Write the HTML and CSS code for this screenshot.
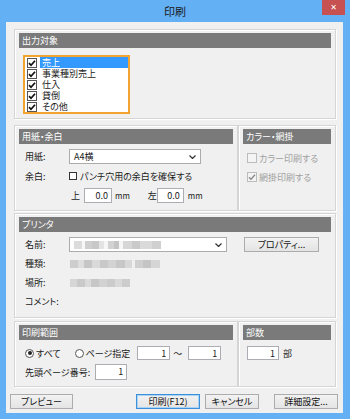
FILE: index.html
```html
<!DOCTYPE html>
<html lang="ja">
<head>
    <meta charset="UTF-8">
    <meta name="viewport" content="width=device-width, initial-scale=1.0">
    <title>印刷</title>
    <link rel="stylesheet" href="styles.css">
</head>
<body>
<div class="window">
    <div class="titlebar">印刷<span class="close">✕</span></div>

    <div class="client">
        <!-- 出力対象 -->
        <div class="group g-target">
            <div class="ghead">出力対象</div>
            <ul class="listbox">
                <li class="sel"><svg class="cb" viewBox="0 0 10 10"><rect x=".5" y=".5" width="9" height="9"/><path d="M2 5.2l2 2.1 4-4.6"/></svg><span>売上</span></li>
                <li><svg class="cb" viewBox="0 0 10 10"><rect x=".5" y=".5" width="9" height="9"/><path d="M2 5.2l2 2.1 4-4.6"/></svg><span>事業種別売上</span></li>
                <li><svg class="cb" viewBox="0 0 10 10"><rect x=".5" y=".5" width="9" height="9"/><path d="M2 5.2l2 2.1 4-4.6"/></svg><span>仕入</span></li>
                <li><svg class="cb" viewBox="0 0 10 10"><rect x=".5" y=".5" width="9" height="9"/><path d="M2 5.2l2 2.1 4-4.6"/></svg><span>貸倒</span></li>
                <li><svg class="cb" viewBox="0 0 10 10"><rect x=".5" y=".5" width="9" height="9"/><path d="M2 5.2l2 2.1 4-4.6"/></svg><span>その他</span></li>
            </ul>
        </div>

        <!-- 用紙・余白 / カラー・網掛 -->
        <div class="row r-paper">
            <div class="group g-left">
                <div class="ghead">用紙・余白</div>
                <div class="field f-first">
                    <label>用紙:</label>
                    <div class="select s-paper">A4横<svg class="chev" viewBox="0 0 7 4"><path d="M.5.5l3 3 3-3"/></svg></div>
                </div>
                <div class="field f-margin">
                    <label>余白:</label>
                    <span class="box"></span>パンチ穴用の余白を確保する
                </div>
                <div class="field f-offsets">
                    <span>上</span>
                    <span class="input i-top">0.0</span>
                    <span class="unit">mm</span>
                    <span class="left-label">左</span>
                    <span class="input i-left">0.0</span>
                    <span class="unit">mm</span>
                </div>
            </div>
            <div class="group g-right">
                <div class="ghead">カラー・網掛</div>
                <div class="dis first"><svg class="cb off" viewBox="0 0 10 10"><rect x=".5" y=".5" width="9" height="9"/></svg>カラー印刷する</div>
                <div class="dis"><svg class="cb" viewBox="0 0 10 10"><rect x=".5" y=".5" width="9" height="9"/><path d="M2 5.2l2 2.1 4-4.6"/></svg>網掛印刷する</div>
            </div>
        </div>

        <!-- プリンタ -->
        <div class="group g-printer">
            <div class="ghead">プリンタ</div>
            <div class="field f-first">
                <label>名前:</label>
                <div class="select s-printer"><span class="blur b-name"></span><svg class="chev" viewBox="0 0 7 4"><path d="M.5.5l3 3 3-3"/></svg></div>
                <span class="btn b-prop">プロパティ...</span>
            </div>
            <div class="info"><label>種類:</label><span class="blur b-type"></span></div>
            <div class="info"><label>場所:</label><span class="blur b-place"></span></div>
            <div class="info"><label>コメント:</label></div>
        </div>

        <!-- 印刷範囲 / 部数 -->
        <div class="row r-range">
            <div class="group g-left">
                <div class="ghead">印刷範囲</div>
                <div class="field f-radio">
                    <span class="radio on"></span><span class="r-all">すべて</span>
                    <span class="radio"></span><span>ページ指定</span>
                    <span class="input i-from">1</span>
                    <span class="tilde">～</span>
                    <span class="input i-to">1</span>
                </div>
                <div class="field f-start">
                    <span>先頭ページ番号:</span>
                    <span class="input i-start">1</span>
                </div>
            </div>
            <div class="group g-right">
                <div class="ghead">部数</div>
                <div class="field f-copies">
                    <span class="input i-copies">1</span><span>部</span>
                </div>
            </div>
        </div>

        <div class="buttons">
            <span class="btn b-preview">プレビュー</span>
            <span class="btn b-print">印刷(F12)</span>
            <span class="btn b-cancel">キャンセル</span>
            <span class="btn b-detail">詳細設定...</span>
        </div>
    </div>
</div>
</body>
</html>
```

FILE: styles.css
```css
* {
    box-sizing: border-box;
}
html, body {
    margin: 0;
}
body {
    width: 350px;
    height: 419px;
    overflow: hidden;
    background: #63b0f5;
    font-family: "Noto Sans CJK JP", "Noto Sans", sans-serif;
    font-size: 9px;
    color: #1b1b1b;
    font-feature-settings: "palt";
}
.window {
    position: relative;
    height: 419px;
}
.titlebar {
    height: 22px;
    line-height: 23px;
    text-align: center;
    font-size: 11px;
    color: #1a1a1a;
}
.close {
    position: absolute;
    top: 0;
    right: 5px;
    width: 23px;
    height: 15px;
    background: #c75050;
    color: #fff;
    font-family: "DejaVu Sans", sans-serif;
    font-size: 8px;
    font-weight: bold;
    line-height: 15px;
    text-align: center;
}
.client {
    margin: 0 7px 0 6px;
    height: 391px;
    background: #f0f0f0;
    padding: 7px 7px 0 8px;
}

/* group boxes */
.group {
    border: 1px solid #d5d5d5;
    box-shadow: inset 1px 1px 0 #fff, 1px 1px 0 #fff;
    padding: 3px 4px 0 4px;
}
.ghead {
    height: 15px;
    line-height: 15px;
    background: #7a7a7a;
    color: #fff;
    padding-left: 3px;
}
.row {
    display: flex;
}
.g-left {
    width: 224px;
}
.g-right {
    width: 98px;
}
.g-target {
    height: 90px;
}
.r-paper {
    margin-top: 6px;
    height: 86px;
}
.g-printer {
    margin-top: 2px;
    height: 105px;
}
.r-range {
    margin-top: 3px;
    height: 66px;
}

/* list box */
.listbox {
    list-style: none;
    margin: 7px 0 0 4px;
    padding: 0 0 0 2px;
    width: 107px;
    height: 59px;
    border: 2px solid #f2a330;
    background: #fff;
}
.listbox li {
    display: flex;
    align-items: center;
    height: 11px;
}
.listbox span {
    flex: 1;
    height: 11px;
    line-height: 11px;
    margin-left: 3px;
    padding-left: 2px;
}
.listbox .sel span {
    background: #3399ff;
    color: #fff;
}
.cb {
    width: 10px;
    height: 10px;
    flex: none;
}
.cb rect {
    fill: #fff;
    stroke: #555;
}
.cb path {
    fill: none;
    stroke: #111;
    stroke-width: 1.7;
}

/* fields */
.field {
    display: flex;
    align-items: center;
    margin-left: 6px;
}
.field label {
    width: 44px;
}
.f-first {
    margin-top: 5px;
    height: 15px;
}
.select {
    height: 15px;
    border: 1px solid #acacac;
    background: #fff;
    display: flex;
    align-items: center;
    justify-content: space-between;
    padding: 0 4px 0 4px;
}
.s-paper {
    width: 132px;
}
.s-printer {
    width: 158px;
}
.chev {
    width: 7px;
    height: 4px;
}
.chev path {
    fill: none;
    stroke: #333;
    stroke-width: 1.2;
}
.f-margin {
    margin-top: 5px;
    height: 14px;
}
.box {
    width: 8px;
    height: 8px;
    border: 1px solid #333;
    background: #fff;
    margin-right: 3px;
}
.f-offsets {
    margin-top: 5px;
    height: 15px;
    padding-left: 46px;
}
.input {
    height: 15px;
    line-height: 13px;
    border: 1px solid #abadb3;
    background: #fff;
    text-align: right;
    padding-right: 3px;
}
.i-top {
    width: 28px;
    margin: 0 3px 0 4px;
}
.i-left {
    width: 27px;
    margin: 0 4px 0 0;
}
.unit {
    font-size: 8px;
}
.left-label {
    margin-left: 18px;
    width: 9px;
}

/* disabled checks */
.dis {
    display: flex;
    align-items: center;
    height: 12px;
    margin: 7px 0 0 4px;
    color: #a0a0a0;
}
.dis.first {
    margin-top: 8px;
}
.dis .cb {
    margin-right: 2px;
}
.dis .cb rect {
    fill: #f4f4f4;
    stroke: #bcbcbc;
}
.dis .cb path {
    stroke: #8a8a8a;
    stroke-width: 1.3;
}

/* printer */
.btn {
    display: block;
    height: 15px;
    line-height: 13px;
    border: 1px solid #acacac;
    background: linear-gradient(#f2f2f2, #e4e4e4);
    text-align: center;
    color: #111;
}
.b-prop {
    width: 75px;
    margin-left: 17px;
}
.info {
    display: flex;
    align-items: center;
    height: 19px;
    margin-left: 6px;
}
.info label {
    width: 45px;
}
.info:nth-of-type(3) {
    margin-top: 2px;
}
.blur {
    height: 8px;
}
.b-name {
    width: 87px;
    background: linear-gradient(90deg, #dcdcdc 0 8px, #f7f7f7 8px 11px, #cfcfcf 11px 18px, #c8c8c8 18px 25px, #e3e3e3 25px 30px, #f6f6f6 30px 34px, #d2d2d2 34px 40px, #c4c4c4 40px 45px, #f6f6f6 45px 49px, #d6d6d6 49px 58px, #cacaca 58px 66px, #dadada 66px 78px, #d0d0d0 78px 87px);
}
.b-type {
    width: 90px;
    background: linear-gradient(90deg, #cdcdcd 0 8px, #dedede 8px 14px, #c6c6c6 14px 22px, #d9d9d9 22px 30px, #c9c9c9 30px 38px, #d3d3d3 38px 46px, #c7c7c7 46px 55px, #d8d8d8 55px 62px, #f0f0f0 62px 65px, #cfcfcf 65px 73px, #c5c5c5 73px 81px, #d6d6d6 81px 90px);
}
.b-place {
    width: 60px;
    background: linear-gradient(90deg, #d6d6d6 0 7px, #c9c9c9 7px 15px, #dadada 15px 21px, #c7c7c7 21px 29px, #d2d2d2 29px 37px, #cbcbcb 37px 45px, #d9d9d9 45px 52px, #cccccc 52px 60px);
}

/* range */
.f-radio {
    margin-top: 6px;
    height: 14px;
}
.radio {
    width: 9px;
    height: 9px;
    border: 1px solid #555;
    border-radius: 50%;
    background: #fff;
    margin-right: 2px;
    position: relative;
}
.radio.on::after {
    content: "";
    position: absolute;
    left: 1.5px;
    top: 1.5px;
    width: 4px;
    height: 4px;
    border-radius: 50%;
    background: #222;
}
.r-all {
    margin-right: 14px;
}
.i-from {
    width: 33px;
    height: 14px;
    margin-left: 7px;
}
.tilde {
    margin: 0 6px 0 3px;
}
.i-to {
    width: 33px;
    height: 14px;
}
.f-start {
    margin-top: 4px;
    height: 16px;
}
.i-start {
    width: 32px;
    height: 16px;
    line-height: 14px;
    margin-left: 5px;
}
.f-copies {
    margin: 6px 0 0 4px;
    height: 14px;
}
.i-copies {
    width: 32px;
    height: 14px;
    margin-right: 4px;
}

/* bottom buttons */
.buttons {
    display: flex;
    margin: 7px -2px 0 -4px;
    height: 15px;
}
.b-preview {
    width: 63px;
}
.b-print {
    width: 64px;
    margin-left: auto;
    border-color: #3c8fd8;
    box-shadow: inset 0 0 0 1px #a8d4f8;
}
.b-cancel {
    width: 54px;
    margin-left: 5px;
}
.b-detail {
    width: 64px;
    margin-left: 15px;
}
```
